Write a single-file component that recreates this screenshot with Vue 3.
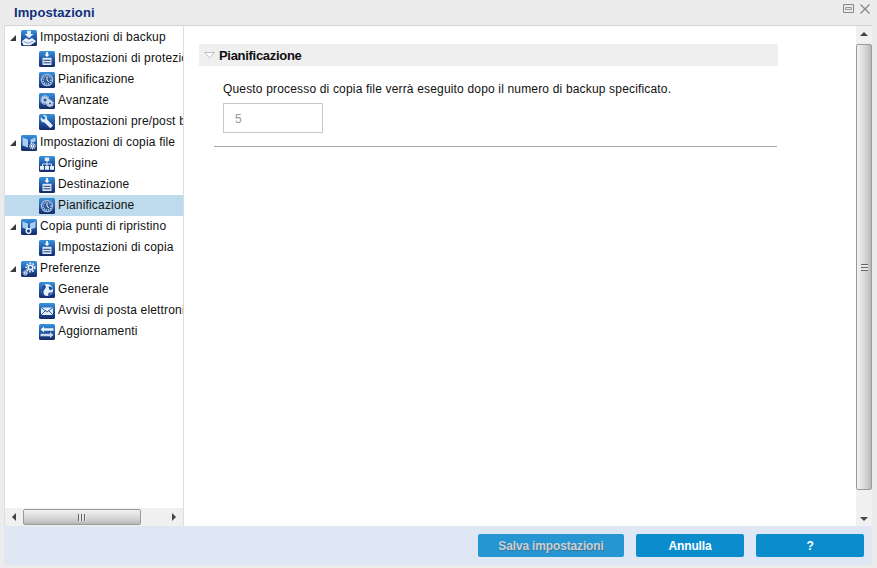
<template>
  <div class="dialog">
    <svg class="defs" width="0" height="0">
      <defs>
        <linearGradient id="tile" x1="0" y1="0" x2="0" y2="1">
          <stop offset="0" stop-color="#3a93dc" />
          <stop offset="0.5" stop-color="#1f58a8" />
          <stop offset="1" stop-color="#142a66" />
        </linearGradient>
      </defs>
      <symbol id="i-backup" viewBox="0 0 16 16">
        <rect width="16" height="16" rx="1.500" fill="url(#tile)" />
        <path d="M6 .8h4v3.200h2.400L8 8.200 3.600 4H6z" fill="#e3edf8" />
        <path d="M.8 11.200L5 8l3 1.800L11 8l4.200 3.200L9.500 15.200H2.500z" fill="#eef4fb" />
        <path d="M2.500 11.500l5 1.800 4.500-2.300" fill="none" stroke="#5e93cc" stroke-width="0.900" />
      </symbol>
      <symbol id="i-drive" viewBox="0 0 16 16">
        <rect width="16" height="16" rx="1.500" fill="url(#tile)" />
        <path d="M7.100 1h1.800v2.500h1.700L8 6 5.400 3.500h1.700z" fill="#fff" />
        <path d="M3.500 6.800h9V14h-9z" fill="#dfe9f5" />
        <path d="M4.500 9.300h7M4.500 11.800h7" stroke="#1c3f80" stroke-width="1" />
      </symbol>
      <symbol id="i-clock" viewBox="0 0 16 16">
        <rect width="16" height="16" rx="1.500" fill="url(#tile)" />
        <circle cx="8" cy="8" r="6.300" fill="#9db8d8" />
        <circle cx="8" cy="8" r="5" fill="#2f5c9c" />
        <circle cx="8" cy="8" r="4" fill="none" stroke="#d9e5f2" stroke-width="1.400" stroke-dasharray="0.900 1.200" />
        <path d="M8 5v3l1.800 2" fill="none" stroke="#fff" stroke-width="0.900" />
      </symbol>
      <symbol id="i-gears" viewBox="0 0 16 16">
        <rect width="16" height="16" rx="1.500" fill="url(#tile)" />
        <circle cx="6" cy="7" r="3.300" fill="#b9cfe6" />
        <circle cx="6" cy="7" r="4" fill="none" stroke="#dbe7f4" stroke-width="1.400" stroke-dasharray="1.300 0.800" />
        <circle cx="6" cy="7" r="1.500" fill="#2a5596" />
        <circle cx="11" cy="10.500" r="2.700" fill="#cfdeee" />
        <circle cx="11" cy="10.500" r="3.200" fill="none" stroke="#eef4fb" stroke-width="1.100" stroke-dasharray="1.100 0.700" />
        <circle cx="11" cy="10.500" r="1.100" fill="#2a5596" />
      </symbol>
      <symbol id="i-wrench" viewBox="0 0 16 16">
        <rect width="16" height="16" rx="1.500" fill="url(#tile)" />
        <path d="M1.800 3.200L4.300 5.600l1.700-.5.500-1.700L4 1.200C6.600.6 8.700 2.500 8 5.200l6 6.200-2.600 2.800-6.200-6C3.100 8.700 1.200 6.200 1.800 3.200z" fill="#e8f0f9" />
      </symbol>
      <symbol id="i-copy" viewBox="0 0 16 16">
        <rect width="16" height="16" rx="1.500" fill="url(#tile)" />
        <path d="M1.500 2.500l5.500 2v8l-5.500-2zM14.500 2.500l-5 2v3.500l5-1.500z" fill="#a9cdf2" />
        <circle cx="11.500" cy="11" r="1.800" fill="#fff" />
        <circle cx="11.500" cy="11" r="2.700" fill="none" stroke="#fff" stroke-width="1.100" stroke-dasharray="1.100 0.700" />
        <circle cx="11.500" cy="11" r="0.700" fill="#1f58a8" />
      </symbol>
      <symbol id="i-tree" viewBox="0 0 16 16">
        <rect width="16" height="16" rx="1.500" fill="url(#tile)" />
        <path d="M8 5v3M3.500 10V8h9v2M8 8v2" fill="none" stroke="#fff" stroke-width="0.800" />
        <rect x="5.800" y="1.500" width="4.400" height="3.500" fill="#e4edf8" />
        <rect x="1" y="10" width="4" height="3.800" fill="#e4edf8" />
        <rect x="6" y="10" width="4" height="3.800" fill="#e4edf8" />
        <rect x="11" y="10" width="4" height="3.800" fill="#e4edf8" />
      </symbol>
      <symbol id="i-restore" viewBox="0 0 16 16">
        <rect width="16" height="16" rx="1.500" fill="url(#tile)" />
        <path d="M1.500 2.500L7 4.500v6L1.500 8.800zM14.500 2.500L9 4.500v6l5.500-1.700z" fill="#a9cdf2" />
        <circle cx="7.500" cy="12" r="2.300" fill="none" stroke="#fff" stroke-width="1.300" />
      </symbol>
      <symbol id="i-prefs" viewBox="0 0 16 16">
        <rect width="16" height="16" rx="1.500" fill="url(#tile)" />
        <circle cx="9.500" cy="6.500" r="3.100" fill="#eef4fb" />
        <circle cx="9.500" cy="6.500" r="4.300" fill="none" stroke="#eef4fb" stroke-width="1.600" stroke-dasharray="1.800 1.300" />
        <circle cx="9.500" cy="6.500" r="1.400" fill="#2a5fa8" />
        <circle cx="4.300" cy="12" r="1.700" fill="#dbe7f4" />
        <circle cx="4.300" cy="12" r="2.300" fill="none" stroke="#dbe7f4" stroke-width="1" stroke-dasharray="1 0.600" />
        <circle cx="4.300" cy="12" r="0.600" fill="#1f4286" />
      </symbol>
      <symbol id="i-globe" viewBox="0 0 16 16">
        <rect width="16" height="16" rx="1.500" fill="url(#tile)" />
        <circle cx="8" cy="8" r="6" fill="#e8f0f9" />
        <path d="M5 2.800C8 4 7 6 5.500 7.500S4 11 6 13.700C3.500 13 2 10.700 2 8s1.500-4.400 3-5.200zM9.500 5c2-1 3.600 0 4.300 2l-3 1.500zM9.500 11l3.500-1-2 3.300-2 .7z" fill="#1d4f9c" />
      </symbol>
      <symbol id="i-mail" viewBox="0 0 16 16">
        <rect width="16" height="16" rx="1.500" fill="url(#tile)" />
        <rect x="2" y="4.500" width="12" height="7.500" fill="#e4edf8" />
        <path d="M2 4.500l6 4.500 6-4.500M2 12l4.500-4.500M14 12L9.500 7.500" fill="none" stroke="#1d4f9c" stroke-width="0.900" />
      </symbol>
      <symbol id="i-update" viewBox="0 0 16 16">
        <rect width="16" height="16" rx="1.500" fill="url(#tile)" />
        <path d="M5 2.500v1.800h9.500v2.400H5v1.800L1.500 5.500z" fill="#f0f5fb" />
        <path d="M11 8v1.800H1.500v2.400H11V14l3.500-3z" fill="#c9daee" />
      </symbol>
    </svg>

    <header class="title-bar">
      <span class="title">Impostazioni</span>
      <div class="window-btns">
        <svg width="11" height="9" viewBox="0 0 11 9">
          <path d="M.5.500h10v8H.5z" fill="none" stroke="#888" />
          <path d="M2.500 3.500h6v2h-6z" fill="none" stroke="#999" />
        </svg>
        <svg width="10" height="10" viewBox="0 0 10 10">
          <path d="M.5.500l9 9M9.500.500l-9 9" stroke="#8a8a8a" stroke-width="1.400" />
        </svg>
      </div>
    </header>

    <div class="body">
      <aside class="sidebar">
        <ul class="tree">
          <li
            v-for="(row, index) in rows"
            :key="index"
            class="row"
            :class="{ child: row.child, selected: row.selected }"
          >
            <i v-if="!row.child" class="expander"></i>
            <svg class="node-icon"><use :href="`#${row.icon}`" /></svg>
            <span class="label">{{ row.label }}</span>
          </li>
        </ul>
        <div class="hscroll">
          <span class="arrow arrow-left"></span>
          <div class="hthumb"><span class="grip"></span></div>
          <span class="arrow arrow-right"></span>
        </div>
      </aside>

      <main class="content">
        <div class="pane">
          <section class="section-head">
            <svg width="11" height="7" viewBox="0 0 11 7"><path d="M.7.500h9.600L5.500 6z" fill="#fff" stroke="#bdbdbd" /></svg>
            <span>Pianificazione</span>
          </section>
          <div class="section-body">
            <p>Questo processo di copia file verrà eseguito dopo il numero di backup specificato.</p>
            <input class="count" type="text" value="5" disabled />
          </div>
          <hr class="rule" />
        </div>
        <div class="vscroll">
          <span class="arrow arrow-up"></span>
          <div class="vthumb"><span class="vgrip"></span></div>
          <span class="arrow arrow-down"></span>
        </div>
      </main>
    </div>

    <footer class="footer">
      <button class="btn save" disabled>Salva impostazioni</button>
      <button class="btn cancel">Annulla</button>
      <button class="btn help">?</button>
    </footer>
  </div>
</template>

<script setup>
const rows = [
  { label: 'Impostazioni di backup', icon: 'i-backup' },
  { label: 'Impostazioni di protezione', icon: 'i-drive', child: true },
  { label: 'Pianificazione', icon: 'i-clock', child: true },
  { label: 'Avanzate', icon: 'i-gears', child: true },
  { label: 'Impostazioni pre/post backup', icon: 'i-wrench', child: true },
  { label: 'Impostazioni di copia file', icon: 'i-copy' },
  { label: 'Origine', icon: 'i-tree', child: true },
  { label: 'Destinazione', icon: 'i-drive', child: true },
  { label: 'Pianificazione', icon: 'i-clock', child: true, selected: true },
  { label: 'Copia punti di ripristino', icon: 'i-restore' },
  { label: 'Impostazioni di copia', icon: 'i-drive', child: true },
  { label: 'Preferenze', icon: 'i-prefs' },
  { label: 'Generale', icon: 'i-globe', child: true },
  { label: 'Avvisi di posta elettronica', icon: 'i-mail', child: true },
  { label: 'Aggiornamenti', icon: 'i-update', child: true },
]
</script>

<style>
html,
body {
  margin: 0;
  overflow: hidden;
}
</style>

<style scoped>
.dialog {
  width: 877px;
  height: 568px;
  display: flex;
  flex-direction: column;
  background: #ececec;
  font-family: "Liberation Sans", Arial, sans-serif;
  font-size: 12px;
  letter-spacing: 0.17px;
  color: #111;
  box-sizing: border-box;
  padding: 0 5px 3px 4px;
}

.defs {
  position: absolute;
}

.title-bar {
  height: 25px;
  flex: none;
  display: flex;
  align-items: center;
  justify-content: space-between;
  padding-left: 10px;
  margin-right: 2px;
}

.title {
  font-size: 13px;
  font-weight: bold;
  letter-spacing: 0.1px;
  color: #0f2f7f;
}

.window-btns {
  display: flex;
  gap: 6px;
  align-items: center;
  margin-top: -8px;
}

.body {
  flex: 1;
  min-height: 0;
  display: flex;
  border-top: 1px solid #d4d4d4;
  border-left: 1px solid #d9dde4;
  background: #fff;
}

.sidebar {
  width: 178px;
  flex: none;
  display: flex;
  flex-direction: column;
  border-right: 1px solid #d9dde4;
}

.tree {
  flex: 1;
  margin: 0;
  padding: 1px 0 0;
  list-style: none;
  overflow: hidden;
}

.row {
  height: 21px;
  display: flex;
  align-items: center;
  white-space: nowrap;
  overflow: hidden;
  padding-left: 5px;
}

.row.child {
  padding-left: 34px;
}

.row.selected {
  background: #bddbec;
}

.expander {
  width: 0;
  height: 0;
  flex: none;
  margin-right: 5px;
  border-style: solid;
  border-width: 0 0 6px 6px;
  border-color: transparent transparent #3a3a3a transparent;
}

.node-icon {
  width: 16px;
  height: 16px;
  flex: none;
  margin-right: 3px;
}

.label {
  line-height: 21px;
}

.hscroll {
  height: 18px;
  flex: none;
  display: flex;
  align-items: center;
  background: #f0f0f0;
  position: relative;
}

.hthumb {
  position: absolute;
  left: 18px;
  top: 1px;
  width: 116px;
  height: 14px;
  border: 1px solid #9a9a9a;
  border-radius: 2px;
  box-sizing: content-box;
  background: linear-gradient(#f2f2f2, #d8d8d8 55%, #b8b8b8);
  display: flex;
  align-items: center;
  justify-content: center;
}

.grip {
  width: 8px;
  height: 7px;
  background: repeating-linear-gradient(90deg, #666 0 1px, #e8e8e8 1px 3px);
}

.arrow {
  position: absolute;
  width: 0;
  height: 0;
  border-style: solid;
  border-color: transparent;
}

.arrow-left {
  left: 7px;
  top: 5px;
  border-width: 4px 4px 4px 0;
  border-right-color: #444;
}

.arrow-right {
  right: 7px;
  top: 5px;
  border-width: 4px 0 4px 4px;
  border-left-color: #444;
}

.content {
  flex: 1;
  min-width: 0;
  display: flex;
  position: relative;
}

.pane {
  flex: 1;
  padding: 18px 78px 0 15px;
}

.section-head {
  height: 22px;
  display: flex;
  align-items: center;
  gap: 4px;
  padding-left: 5px;
  background: #efefef;
  font-size: 13px;
  font-weight: bold;
  letter-spacing: -0.3px;
}

.section-body {
  padding-left: 24px;
}

.section-body p {
  margin: 16px 0 0;
  line-height: 14px;
}

.count {
  display: block;
  width: 100px;
  height: 30px;
  margin-top: 7px;
  padding: 2px 0 0 11px;
  box-sizing: border-box;
  border: 1px solid #c8c8c8;
  background: #fff;
  color: #999;
  font: 12px "Liberation Sans", Arial, sans-serif;
}

.rule {
  margin: 13px 1px 0 15px;
  border: 0;
  border-top: 1px solid #a9a9a9;
}

.vscroll {
  width: 16px;
  flex: none;
  position: relative;
  background: #f0f0f0;
}

.vthumb {
  position: absolute;
  left: 0;
  top: 18px;
  bottom: 36px;
  width: 14px;
  border: 1px solid #9a9a9a;
  border-radius: 2px;
  background: linear-gradient(90deg, #f2f2f2, #d8d8d8 55%, #b8b8b8);
  display: flex;
  align-items: center;
  justify-content: center;
}

.vgrip {
  width: 7px;
  height: 7px;
  background: repeating-linear-gradient(180deg, #666 0 1px, #e8e8e8 1px 3px);
}

.arrow-up {
  left: 4px;
  top: 6px;
  border-width: 0 4px 4px 4px;
  border-bottom-color: #444;
}

.arrow-down {
  left: 4px;
  bottom: 5px;
  border-width: 4px 4px 0 4px;
  border-top-color: #444;
}

.footer {
  height: 39px;
  flex: none;
  display: flex;
  justify-content: flex-end;
  align-items: center;
  gap: 12px;
  padding-right: 8px;
  background: #dfe7f5;
}

.btn {
  height: 23px;
  padding: 0;
  border: 0;
  border-radius: 2px;
  background: #0b8dcd;
  color: #fff;
  font: bold 12px "Liberation Sans", Arial, sans-serif;
  letter-spacing: -0.15px;
}

.save {
  width: 146px;
  background: #2596d1;
  color: #c9d0d8;
  text-shadow: 1px 1px 0 rgba(80, 90, 100, 0.6);
}

.cancel,
.help {
  width: 108px;
}
</style>
